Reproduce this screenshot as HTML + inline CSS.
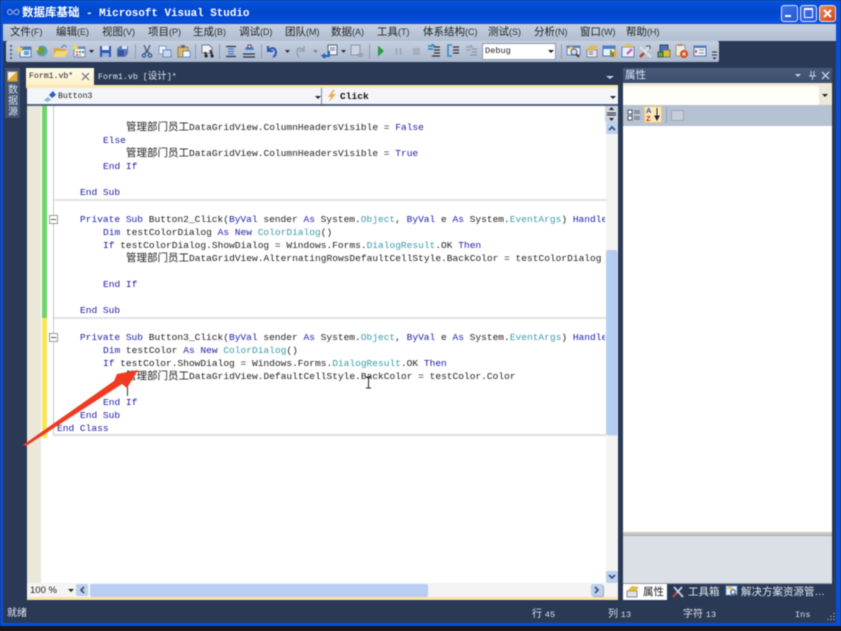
<!DOCTYPE html>
<html><head><meta charset="utf-8">
<style>
html,body{margin:0;padding:0;background:#1a1a1a;overflow:hidden}
#r{position:relative;width:841px;height:631px;overflow:hidden;background:#2a3a56;filter:blur(.45px);font-family:"Liberation Sans","Noto Sans CJK SC",sans-serif;font-size:10px}
#r div,#r span.a,#r svg{position:absolute}
.c{font-family:"Liberation Mono","Noto Sans CJK SC",monospace;font-size:9.55px;line-height:13px;height:13px;white-space:pre;color:#222}
.c b{font-weight:normal;color:#1c1ca8}
.c i{font-style:normal;color:#3a9ca8}
.c u{text-decoration:none;font-family:"Noto Sans CJK SC",sans-serif;font-size:10.5px}
.m{top:26px;height:13px;line-height:13px;color:#222;font-size:10.5px;white-space:pre}
.m small{font-size:9px;color:#333}
.sep{top:44px;width:1px;height:15px;background:#8e9cb2}
</style></head><body>
<div id="r">
<!-- title bar -->
<div style="left:0;top:0;width:841px;height:24px;background:linear-gradient(#0a5be0 0,#0250d8 12%,#0245cc 55%,#0a52e0 100%)"></div>
<svg style="left:6px;top:8px" width="15" height="9"><path d="M4 1.5a2.5 2.5 0 1 0 .1 5C6 6.5 8 2 10.5 1.5a2.5 2.5 0 1 1 0 5C8 6.5 6 2 4 1.5Z" fill="none" stroke="#8fa2d6" stroke-width="1.2"/></svg>
<div style="left:22px;top:5px;height:15px;line-height:15px;color:#fff;font-family:'Liberation Mono','Noto Sans CJK SC',monospace;font-weight:bold;font-size:10.9px;white-space:pre"><span style="font-size:11.5px;font-family:'Noto Sans CJK SC',sans-serif">数据库基础</span> - Microsoft Visual Studio</div>
<!-- window buttons -->
<div style="left:781px;top:5px;width:15px;height:15px;border:1px solid #dfe8fa;border-radius:3px;background:linear-gradient(135deg,#3f72e6,#2556d8)"></div>
<div style="left:785px;top:15px;width:6px;height:2px;background:#fff"></div>
<div style="left:800px;top:5px;width:15px;height:15px;border:1px solid #dfe8fa;border-radius:3px;background:linear-gradient(135deg,#3f72e6,#2556d8)"></div>
<div style="left:804px;top:8px;width:7px;height:7px;border:1px solid #fff;border-top-width:2px"></div>
<div style="left:819px;top:5px;width:15px;height:15px;border:1px solid #f0e4dc;border-radius:3px;background:linear-gradient(135deg,#ec8a5e,#d2411c)"></div>
<svg style="left:819px;top:5px" width="17" height="17"><path d="M5 5L12 12M12 5L5 12" stroke="#fff" stroke-width="2"/></svg>
<!-- left/right blue frame -->
<div style="left:0;top:0;width:3px;height:631px;background:#0a4ed8"></div>
<div style="left:836px;top:0;width:5px;height:631px;background:#0a4ed8"></div>
<!-- menu bar -->
<div style="left:3px;top:24px;width:833px;height:17px;background:linear-gradient(#c4cfdf,#b2bed2)"></div>
<div class="m" style="left:10px">文件<small>(F)</small></div>
<div class="m" style="left:56px">编辑<small>(E)</small></div>
<div class="m" style="left:102px">视图<small>(V)</small></div>
<div class="m" style="left:148px">项目<small>(P)</small></div>
<div class="m" style="left:193px">生成<small>(B)</small></div>
<div class="m" style="left:239px">调试<small>(D)</small></div>
<div class="m" style="left:285px">团队<small>(M)</small></div>
<div class="m" style="left:331px">数据<small>(A)</small></div>
<div class="m" style="left:377px">工具<small>(T)</small></div>
<div class="m" style="left:423px">体系结构<small>(C)</small></div>
<div class="m" style="left:488px">测试<small>(S)</small></div>
<div class="m" style="left:534px">分析<small>(N)</small></div>
<div class="m" style="left:580px">窗口<small>(W)</small></div>
<div class="m" style="left:626px">帮助<small>(H)</small></div>
<!-- toolbar -->
<div style="left:3px;top:41px;width:833px;height:21px;background:#2a3a56"></div>
<div style="left:6px;top:41px;width:713px;height:21px;background:linear-gradient(#c6d0e0,#aab7cc);border-radius:2px"></div>
<svg style="left:0;top:0" width="841" height="70">
<g fill="#5a6678"><rect x="10" y="45" width="2" height="2"/><rect x="10" y="49" width="2" height="2"/><rect x="10" y="53" width="2" height="2"/><rect x="10" y="57" width="2" height="2"/></g>
<!-- new project -->
<rect x="20" y="47" width="11" height="10" fill="#e8eef6" stroke="#4d7fb8"/><rect x="20" y="47" width="11" height="3" fill="#4d7fb8"/><rect x="24" y="51" width="5" height="4" fill="#6f9ccc"/><path d="M19 45l1.5 3l3-1l-2 2.5l2 2.5l-3-1l-2 3l-.5-3.5l-3-1l3-1z" fill="#f5d760"/>
<!-- globe -->
<circle cx="42" cy="51" r="5.5" fill="#5d9fd0"/><path d="M38 48c3-2 6-1 7 2c-1 3-3 5-5 5c-2-2-3-4-2-7z" fill="#6a9c40"/><path d="M37 46l1 2l2-1l-2 2l1 2l-2-1l-2 1l1-2l-1-2l2 1z" fill="#f5d760"/>
<!-- folder -->
<path d="M54 48h5l1 1h6v7H54z" fill="#d9a73a"/><path d="M56 51h12l-3 6H53z" fill="#f4d678"/><path d="M61 48l3-3l3 2" fill="none" stroke="#5080c0"/>
<!-- add item -->
<rect x="74" y="47" width="11" height="10" fill="#f4f6fa" stroke="#6a8ab8"/><rect x="74" y="47" width="11" height="2" fill="#6a8ab8"/><g fill="#d88040"><rect x="76" y="51" width="2" height="2"/></g><rect x="79" y="51" width="2" height="2" fill="#50a050"/><rect x="82" y="51" width="2" height="2" fill="#5070c0"/><rect x="76" y="54" width="2" height="2" fill="#c05070"/><rect x="79" y="54" width="2" height="2" fill="#d8b040"/><path d="M75 44l1 2l2-1l-1 2l2 1l-3 1l-1 2l-1-2l-2-1l2-1l-1-2z" fill="#f5d760"/>
<path d="M89 50h5l-2.5 3z" fill="#223"/>
<!-- save -->
<rect x="100" y="46" width="11" height="11" fill="#2e58b8"/><rect x="102" y="46" width="7" height="4" fill="#e6ecf6"/><rect x="102" y="53" width="7" height="4" fill="#9ab0d8"/>
<path d="M120 46h8v8l-3 3h-8v-8z" fill="#5b78b8"/><path d="M122 46h5v3h-5z" fill="#dfe6f2"/><path d="M118 50h6v6h-6z" fill="#34569e"/>
<rect x="135" y="44" width="1" height="15" fill="#8e9cb2"/>
<!-- cut -->
<path d="M144 45l3 7l3-7M146.5 51l-2 3M147.5 51l2 3" fill="none" stroke="#4a5a78" stroke-width="1.3"/><circle cx="144" cy="55.5" r="1.7" fill="none" stroke="#2a50a0" stroke-width="1.2"/><circle cx="150" cy="55.5" r="1.7" fill="none" stroke="#2a50a0" stroke-width="1.2"/>
<!-- copy -->
<rect x="159" y="46" width="7" height="8" fill="#eef2f8" stroke="#7f9cc4"/><rect x="163" y="50" width="8" height="7" fill="#c6d8f0" stroke="#6f8cc0"/>
<!-- paste -->
<rect x="178" y="47" width="10" height="10" fill="#d8b868" stroke="#96804a"/><rect x="181" y="45" width="4" height="3" fill="#6a6a6a"/><rect x="183" y="51" width="7" height="6" fill="#f4f6fa" stroke="#6f8cc0"/>
<rect x="195" y="44" width="1" height="15" fill="#8e9cb2"/>
<!-- find -->
<path d="M202 45h7l3 3v5h-10z" fill="#f4f4f4" stroke="#6a7a90"/><path d="M205 52l2 5M210 50l3 7" stroke="#333" stroke-width="2"/><circle cx="206" cy="56" r="1.5" fill="#222"/><circle cx="212" cy="56" r="1.5" fill="#222"/>
<rect x="219" y="44" width="1" height="15" fill="#8e9cb2"/>
<!-- align -->
<path d="M226 46.5h10M226 56.5h10" stroke="#2a3448" stroke-width="1.2"/><path d="M228 49h6M228 51.5h6M228 54h6" stroke="#4a80c8" stroke-width="1.2"/>
<path d="M245 50a4.5 4 0 0 1 9 0z" fill="#4a80c8"/><path d="M248 45h3v3h-3z" fill="#e8e8e8" stroke="#557"/><path d="M243 54h12M243 57h12" stroke="#2a3448" stroke-width="1.2"/>
<rect x="261" y="44" width="1" height="15" fill="#8e9cb2"/>
<!-- undo -->
<path d="M268 46v5h5M268 51c3-4 7-4 8 1c0 2-1 4-3 5" fill="none" stroke="#2a58b8" stroke-width="2"/>
<path d="M285 50h5l-2.5 3z" fill="#334"/>
<path d="M304 46v5h-5M304 51c-3-4-7-4-7 1c0 2 1 4 2 5" fill="none" stroke="#93a0b4" stroke-width="1.5"/>
<path d="M313 50h5l-2.5 3z" fill="#7a869a"/>
<!-- nav -->
<rect x="328" y="45" width="9" height="10" fill="#eef2f8" stroke="#567"/><path d="M330 48h5M330 50h5" stroke="#678"/><path d="M329 51v5h-6l2 2M323 56l2-2" fill="none" stroke="#2a62c0" stroke-width="2"/>
<path d="M341 50h5l-2.5 3z" fill="#334"/>
<rect x="351" y="45" width="9" height="10" fill="#ccd4e0" stroke="#8a96a8"/><path d="M358 53h5v4h-5z" fill="#98a4b6"/>
<rect x="369" y="44" width="1" height="15" fill="#8e9cb2"/>
<path d="M378 45.5L384 51L378 56.5Z" fill="#2a9a40"/>
<path d="M396.5 48v7M400.5 48v7" stroke="#98a4b6" stroke-width="1.5"/>
<rect x="413" y="48" width="7" height="7" fill="#a4afc0"/>
<!-- step icons -->
<path d="M428 46h6l-2-2M428 49h5" fill="none" stroke="#3a8ac0" stroke-width="1.8"/><path d="M434 47h6M434 50h6M434 53h6M432 56h8" stroke="#333" stroke-width="1.2"/>
<path d="M452 45h-4v11h4" fill="none" stroke="#3a8ac0" stroke-width="1.6"/><path d="M453 47h6M453 50h6M453 53h6" stroke="#333" stroke-width="1.2"/>
<path d="M466 47h6l-2-2M466 50h5" fill="none" stroke="#94a8bc" stroke-width="1.5"/><path d="M472 49h5M472 52h5M470 55h7" stroke="#8a94a4" stroke-width="1.2"/>
<rect x="561" y="44" width="1" height="15" fill="#8e9cb2"/>
<!-- right icons -->
<rect x="567" y="46" width="13" height="9" fill="#eef2f8" stroke="#5a80b8"/><rect x="567" y="46" width="13" height="2" fill="#5a80b8"/><path d="M567 49l4-3l4 3z" fill="#e8c060"/><circle cx="574" cy="52" r="3" fill="#c8e0f4" stroke="#556"/><path d="M576 54l3 3" stroke="#444" stroke-width="2"/>
<path d="M587 50h10v7h-10z" fill="#e4e8ee" stroke="#889"/><path d="M586 50l5-5l7 1l-3 4z" fill="#e0bc50"/><path d="M589 52h4M589 54h4" stroke="#778"/>
<rect x="603" y="46" width="12" height="10" fill="#eef2f8" stroke="#4a78b8"/><rect x="603" y="46" width="12" height="3" fill="#4a80c8"/><rect x="610" y="50" width="2" height="7" fill="#50a050"/><rect x="612" y="52" width="2" height="5" fill="#d06030"/><rect x="614" y="49" width="2" height="8" fill="#d0b030"/>
<rect x="622" y="47" width="12" height="10" fill="#e8eef8" stroke="#5a80b8"/><path d="M622 47l4-3h5l3 3z" fill="#e0c060"/><path d="M627 54l5-5" stroke="#d060b0" stroke-width="2.5"/>
<path d="M640 47l11 10M650 46l-10 11" stroke="#dfe3ea" stroke-width="2"/><path d="M640 57l4-4" stroke="#b83a2a" stroke-width="2.5"/><path d="M646 46h4v3" fill="none" stroke="#556" stroke-width="1"/>
<rect x="660" y="45" width="8" height="7" fill="#4a70c0" stroke="#345"/><rect x="663" y="50" width="7" height="7" fill="#d8c030" stroke="#776"/><rect x="658" y="52" width="5" height="5" fill="#60a050" stroke="#454"/>
<rect x="676" y="45" width="9" height="11" fill="#f0ebd8" stroke="#998"/><rect x="678" y="44" width="4" height="2" fill="#a88"/><circle cx="684" cy="54" r="4" fill="#d84a20"/><path d="M682.5 52.5l3 3M685.5 52.5l-3 3" stroke="#fff"/>
<rect x="694" y="46" width="12" height="10" fill="#eef2f8" stroke="#4a78b8"/><rect x="694" y="46" width="12" height="2" fill="#4a80c8"/><path d="M696 50v3" stroke="#c83020" stroke-width="1.5"/><path d="M699 50h5M699 53h5" stroke="#889"/>
<path d="M712 52h5M712 55h5" stroke="#334"/><path d="M712.5 57.5h4l-2 2z" fill="#334"/>
</svg>
<!-- Debug combo -->
<div style="left:482px;top:43px;width:72px;height:15px;background:#fff;border:1px solid #8a99b0"></div>
<div style="left:485px;top:45px;height:12px;line-height:12px;font-family:'Liberation Mono',monospace;font-size:8.6px;color:#222">Debug</div>
<div style="left:548px;top:50px;border:3px solid transparent;border-top:3px solid #223"></div>
<!-- Left dock -->
<div style="left:3px;top:62px;width:23px;height:537px;background:#2a3a56"></div>
<div style="left:5px;top:68px;width:15px;height:50px;background:#42536f"></div>
<div style="left:7px;top:71px;width:11px;height:11px;background:linear-gradient(135deg,#f2f2e8 45%,#e8a830 45%);border:1px solid #8a8060;box-sizing:border-box"></div>
<div style="left:8px;top:85px;width:12px;line-height:11px;font-size:10px;color:#dce4ef">数<br>据<br>源</div>
<!-- Doc tabs -->
<div style="left:26px;top:68px;width:68px;height:18px;background:linear-gradient(#fffbe8,#fdf0c8)"></div>
<div style="left:29px;top:70px;line-height:14px;font-family:'Liberation Mono',monospace;font-size:8.2px;color:#222">Form1.vb*</div>
<svg style="left:81px;top:72px" width="10" height="10"><path d="M1 1L8 8M8 1L1 8" stroke="#667" stroke-width="1.1"/></svg>
<div style="left:98px;top:70px;line-height:14px;font-family:'Liberation Mono','Noto Sans CJK SC',monospace;font-size:8.3px;color:#dfe5ee;white-space:pre">Form1.vb [<span style="font-size:9.5px">设计</span>]*</div>
<div style="left:606px;top:76px;border:4px solid transparent;border-top:3px solid #c8d2e0"></div>
<div style="left:26px;top:85px;width:592px;height:3px;background:#fde8b0"></div>
<!-- editor combos -->
<div style="left:27px;top:88px;width:591px;height:17px;background:#f3f5f9"></div>
<div style="left:321px;top:88px;width:1px;height:17px;background:#7a889c"></div>
<div style="left:27px;top:104px;width:591px;height:2px;background:#53647f"></div>
<svg style="left:43px;top:90px" width="14" height="13"><path d="M1 10L5 7L8 10L4 12Z" fill="#8ab8d8"/><path d="M6 5L10 1L13 5L9 8Z" fill="#2e60c8"/></svg>
<div style="left:58px;top:90px;line-height:13px;font-family:'Liberation Mono',monospace;font-size:8.2px;color:#222">Button3</div>
<div style="left:315px;top:96px;border:3px solid transparent;border-top:3px solid #223"></div>
<svg style="left:327px;top:90px" width="10" height="13"><path d="M6 0L1 7H4L2 12L9 4H5L8 0Z" fill="#e8b050"/></svg>
<div style="left:340px;top:90px;line-height:13px;font-family:'Liberation Mono',monospace;font-weight:bold;font-size:9.6px;color:#111">Click</div>
<div style="left:610px;top:96px;border:3px solid transparent;border-top:3px solid #223"></div>
<!-- editor -->
<div style="left:27px;top:106px;width:591px;height:477px;background:#fff"></div>
<div style="left:27px;top:106px;width:14px;height:477px;background:#ebe8d9"></div>
<div style="left:42px;top:106px;width:5px;height:212px;background:#6fd46c"></div>
<div style="left:42px;top:318px;width:5px;height:120px;background:#fbe45c"></div>
<div style="left:53px;top:106px;width:1px;height:330px;background:#c8c8c8"></div>
<div style="left:54px;top:199px;width:552px;height:2px;background:#e2e2e2"></div>
<div style="left:54px;top:317px;width:552px;height:2px;background:#e2e2e2"></div>
<div style="left:53px;top:434px;width:553px;height:2px;background:#dedede"></div>
<div style="left:49px;top:215px;width:7px;height:7px;border:1px solid #999;background:#fff"></div>
<div style="left:51px;top:219px;width:5px;height:1px;background:#555"></div>
<div style="left:49px;top:333px;width:7px;height:7px;border:1px solid #999;background:#fff"></div>
<div style="left:51px;top:337px;width:5px;height:1px;background:#555"></div>

<div class="c" style="left:126px;top:120px"><u>管理部门员工</u>DataGridView.ColumnHeadersVisible = <b>False</b></div>
<div class="c" style="left:103px;top:134px"><b>Else</b></div>
<div class="c" style="left:126px;top:146px"><u>管理部门员工</u>DataGridView.ColumnHeadersVisible = <b>True</b></div>
<div class="c" style="left:103px;top:160px"><b>End If</b></div>
<div class="c" style="left:80px;top:186px"><b>End Sub</b></div>
<div class="c" style="left:80px;top:213px;width:525px;overflow:hidden"><b>Private Sub</b> Button2_Click(<b>ByVal</b> sender <b>As</b> System.<i>Object</i>, <b>ByVal</b> e <b>As</b> System.<i>EventArgs</i>) <b>Handles</b></div>
<div class="c" style="left:103px;top:226px"><b>Dim</b> testColorDialog <b>As New</b> <i>ColorDialog</i>()</div>
<div class="c" style="left:103px;top:239px"><b>If</b> testColorDialog.ShowDialog = Windows.Forms.<i>DialogResult</i>.OK <b>Then</b></div>
<div class="c" style="left:126px;top:251px;width:479px;overflow:hidden"><u>管理部门员工</u>DataGridView.AlternatingRowsDefaultCellStyle.BackColor = testColorDialog</div>
<div class="c" style="left:103px;top:278px"><b>End If</b></div>
<div class="c" style="left:80px;top:304px"><b>End Sub</b></div>
<div class="c" style="left:80px;top:331px;width:525px;overflow:hidden"><b>Private Sub</b> Button3_Click(<b>ByVal</b> sender <b>As</b> System.<i>Object</i>, <b>ByVal</b> e <b>As</b> System.<i>EventArgs</i>) <b>Handles</b></div>
<div class="c" style="left:103px;top:344px"><b>Dim</b> testColor <b>As New</b> <i>ColorDialog</i>()</div>
<div class="c" style="left:103px;top:357px"><b>If</b> testColor.ShowDialog = Windows.Forms.<i>DialogResult</i>.OK <b>Then</b></div>
<div class="c" style="left:126px;top:369px"><u>管理部门员工</u>DataGridView.DefaultCellStyle.BackColor = testColor.Color</div>
<div class="c" style="left:103px;top:396px"><b>End If</b></div>
<div class="c" style="left:80px;top:409px"><b>End Sub</b></div>
<div class="c" style="left:57px;top:422px"><b>End Class</b></div>
<!-- caret & I-beam -->
<div style="left:127px;top:383px;width:1px;height:13px;background:#333"></div>
<svg style="left:364px;top:376px" width="9" height="14"><path d="M2 1H4.5V12H2M7 1H4.5M7 12H4.5" fill="none" stroke="#222" stroke-width="1"/></svg>
<!-- red arrow -->
<svg style="left:0;top:0" width="841" height="631"><path d="M23 445L114 381L117 374L138 370L127 388L122 384L26 446Z" fill="#f03a22"/></svg>
<!-- vertical scrollbar -->
<div style="left:606px;top:106px;width:12px;height:477px;background:#f4f4f2"></div>
<div style="left:605px;top:106px;width:13px;height:16px;background:#cbd3e0"></div>
<svg style="left:605px;top:106px" width="13" height="16"><path d="M6.5 1L9 4H4ZM6.5 15L9 12H4Z" fill="#223"/><path d="M2 7H11M2 9H11" stroke="#223"/></svg>
<div style="left:606px;top:122px;width:12px;height:12px;background:#bcd0f0;border-radius:2px"></div>
<svg style="left:606px;top:122px" width="12" height="12"><path d="M3 8L6 5L9 8" fill="none" stroke="#3b4d6e" stroke-width="1.6"/></svg>
<div style="left:606px;top:250px;width:11px;height:185px;background:linear-gradient(90deg,#b8cef2,#b4caf0);border-radius:2px;box-shadow:1px 1px 0 #dde"></div>
<div style="left:606px;top:571px;width:12px;height:12px;background:#bcd0f0;border-radius:2px"></div>
<svg style="left:606px;top:571px" width="12" height="12"><path d="M3 4L6 7L9 4" fill="none" stroke="#3b4d6e" stroke-width="1.6"/></svg>
<!-- bottom hscroll -->
<div style="left:27px;top:583px;width:591px;height:15px;background:#f4f4f2"></div>
<div style="left:30px;top:584px;line-height:13px;font-size:9.5px;color:#222">100 %</div>
<div style="left:68px;top:589px;border:3px solid transparent;border-top:3px solid #223"></div>
<div style="left:76px;top:584px;width:12px;height:12px;background:#bcd0f0;border-radius:2px"></div>
<svg style="left:76px;top:584px" width="12" height="12"><path d="M8 3L5 6L8 9" fill="none" stroke="#3b4d6e" stroke-width="1.6"/></svg>
<div style="left:90px;top:584px;width:338px;height:12px;background:#b8cef2;border-radius:2px;box-shadow:0 1px 0 #ccd"></div>
<div style="left:591px;top:584px;width:12px;height:12px;background:#bcd0f0;border-radius:2px;box-shadow:1px 1px 0 #aab"></div>
<svg style="left:591px;top:584px" width="12" height="12"><path d="M4 3L7 6L4 9" fill="none" stroke="#3b4d6e" stroke-width="1.6"/></svg>
<div style="left:27px;top:597px;width:591px;height:3px;background:#fde2a8"></div>
<!-- Properties panel -->
<div style="left:623px;top:68px;width:209px;height:15px;background:linear-gradient(#48597a,#3d4e6e)"></div>
<div style="left:625px;top:68px;line-height:15px;font-size:10.5px;color:#dfe6f0">属性</div>
<div style="left:795px;top:74px;border:3px solid transparent;border-top:3px solid #c8d2e0"></div>
<svg style="left:808px;top:70px" width="24" height="11"><path d="M3 1V6M6 1V6M1 6H8M4.5 6V10" fill="none" stroke="#c8d2e0"/><path d="M14 2L21 9M21 2L14 9" stroke="#c8d2e0" stroke-width="1.3"/></svg>
<div style="left:623px;top:83px;width:209px;height:3px;background:#ece9d8"></div>
<div style="left:623px;top:86px;width:209px;height:19px;background:#fffef9"></div>
<div style="left:819px;top:86px;width:13px;height:19px;background:#ece9d8"></div>
<div style="left:822px;top:94px;border:3px solid transparent;border-top:3px solid #223"></div>
<div style="left:623px;top:105px;width:209px;height:21px;background:#b6c2d2"></div>
<svg style="left:627px;top:108px" width="14" height="14"><rect x="1" y="2" width="4" height="4" fill="#fff" stroke="#556"/><rect x="1" y="8" width="4" height="4" fill="#fff" stroke="#556"/><path d="M7 3H13M7 5H13M7 9H13M7 11H13" stroke="#667"/></svg>
<div style="left:644px;top:106px;width:18px;height:17px;background:#fde9b8;border:1px solid #e6c878;box-sizing:border-box"></div>
<div style="left:646px;top:107px;font:bold 7.5px/7.5px 'Liberation Sans',sans-serif;color:#2a50c0">A<br><span style="color:#c02a2a">Z</span></div>
<svg style="left:654px;top:108px" width="6" height="13"><path d="M3 0V9M1 8L3 12L5 8Z" fill="#223" stroke="#223"/></svg>
<div style="left:666px;top:107px;width:1px;height:16px;background:#96a4b8"></div>
<div style="left:671px;top:110px;width:11px;height:9px;background:#c6ceda;border:1px solid #9aa6b8"></div>
<div style="left:623px;top:126px;width:209px;height:406px;background:#fff"></div>
<div style="left:623px;top:532px;width:209px;height:3px;background:#c8c8c2;border-bottom:1px solid #aaa"></div>
<div style="left:623px;top:536px;width:209px;height:47px;background:#dbdfe6"></div>
<div style="left:623px;top:583px;width:209px;height:1px;background:#99a"></div>
<!-- panel tabs -->
<div style="left:623px;top:584px;width:44px;height:16px;background:#fff"></div>
<svg style="left:626px;top:585px" width="14" height="13"><path d="M1 6h10v6H1z" fill="#e0e4ea" stroke="#889"/><path d="M1 6l5-5l7 1l-3 4z" fill="#e0bc40"/></svg>
<div style="left:643px;top:585px;line-height:15px;font-size:10.5px;color:#222">属性</div>
<svg style="left:671px;top:585px" width="14" height="13"><path d="M2 12L11 2M3 2L12 12" stroke="#c8d0dc" stroke-width="1.8"/><path d="M2 12L6 8" stroke="#c04030" stroke-width="2"/></svg>
<div style="left:688px;top:585px;line-height:15px;font-size:10.5px;color:#dfe5ee">工具箱</div>
<svg style="left:725px;top:585px" width="14" height="13"><rect x="1" y="1" width="11" height="9" fill="#eef2f8" stroke="#5a90d0"/><path d="M1 4l4-3l4 3z" fill="#e8c050"/><circle cx="8" cy="7" r="2.5" fill="#c8e0f4" stroke="#456"/><path d="M10 9l3 3" stroke="#345" stroke-width="1.5"/></svg>
<div style="left:741px;top:585px;line-height:15px;font-size:10.5px;color:#dfe5ee;white-space:pre">解决方案资源管…</div>
<!-- status bar -->
<div style="left:7px;top:607px;line-height:14px;font-size:10px;color:#e4e9f1">就绪</div>
<div style="left:532px;top:608px;line-height:14px;font-size:10px;color:#d8dfea;white-space:pre">行 <span style="font-family:'Liberation Mono';font-size:8.6px">45</span></div>
<div style="left:608px;top:608px;line-height:14px;font-size:10px;color:#d8dfea;white-space:pre">列 <span style="font-family:'Liberation Mono';font-size:8.6px">13</span></div>
<div style="left:683px;top:608px;line-height:14px;font-size:10px;color:#d8dfea;white-space:pre">字符 <span style="font-family:'Liberation Mono';font-size:8.6px">13</span></div>
<div style="left:795px;top:608px;line-height:14px;font-family:'Liberation Mono',monospace;font-size:8.6px;color:#d8dfea">Ins</div>
<svg style="left:825px;top:612px" width="11" height="10"><path d="M9 1V2M6 4V5M9 4V5M3 7V8M6 7V8M9 7V8" stroke="#c8d0dc"/></svg>
<div style="left:0;top:623px;width:841px;height:3px;background:#0a4ed8"></div>
<div style="left:0;top:626px;width:841px;height:5px;background:#171717"></div>
</div>
</body></html>
